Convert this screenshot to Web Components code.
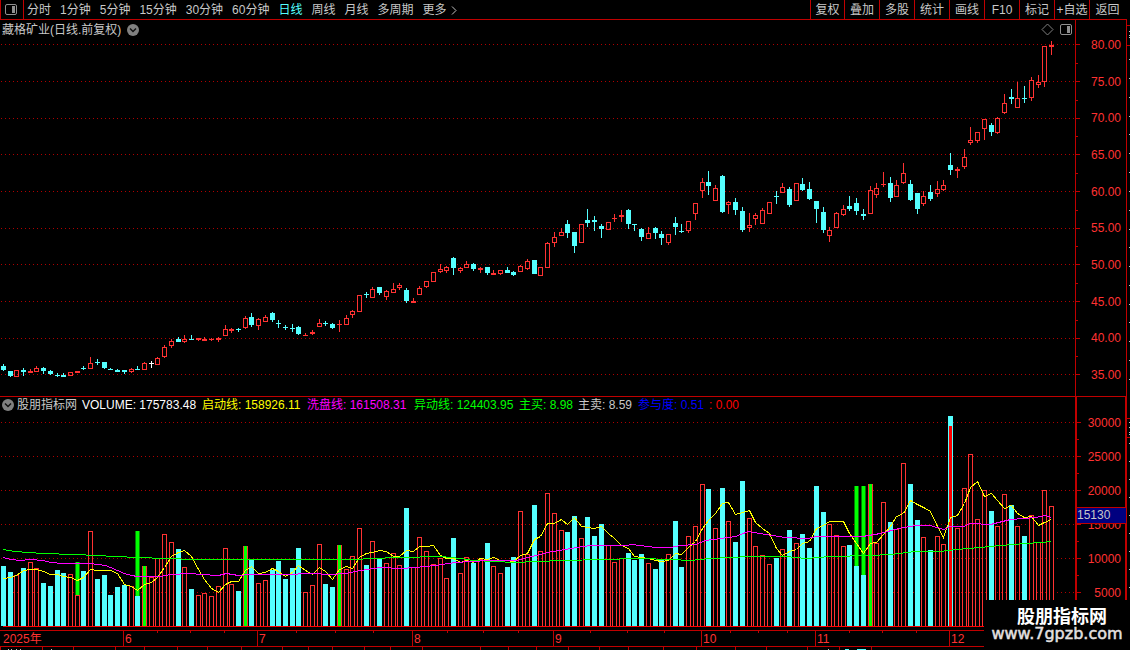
<!DOCTYPE html>
<html lang="zh-CN">
<head>
<meta charset="utf-8">
<title>藏格矿业 日线</title>
<style>
  html, body { margin: 0; background: #000; }
  body { font: 12px/16px "Liberation Sans", "Noto Sans CJK SC", sans-serif; color: #c8c8c8; }
</style>
</head>
<body>
<stock-app></stock-app>
<script>
const LINE = '#c00000', DOT = '#b00000', RED = '#ff3232', CYAN = '#54ffff';
const STEP = 6.7188, ORIGIN = 3.35;

// One day per entry: kind, high, body top, body bottom, low, volume top (chart units).
const DAYS = `C364,366,370,371,566 C371,371,376,377,572 R370,370,377,377,575 C368,370,372,376,568 R369,371,373,373,562
R366,368,372,372,568 C367,368,371,374,583 C370,371,374,375,586 C373,375,376,377,570 C373,375,377,377,573
R372,372,376,376,574 R371,371,373,373,595 C366,368,369,370,571 R357,363,369,369,531 C359,362,363,365,579
C362,362,368,369,575 C368,369,370,370,595 C369,370,372,372,587 C370,370,372,374,585 R368,369,372,373,586
C366,369,370,370,596 R362,363,370,370,566 W361,363,364,368,577 R357,358,365,365,558 R345,347,357,358,534
R339,341,346,348,542 C337,339,342,342,549 R335,339,342,343,567 C335,339,340,340,589 R338,338,340,341,595
R337,339,341,341,593 R338,339,340,341,596 R337,338,340,342,586 R325,329,336,336,548 R328,329,331,333,584
C328,329,330,332,591 R316,318,328,329,546 C313,317,325,327,560 R318,319,326,330,583 R315,317,322,322,580
C312,313,320,322,570 C320,323,324,328,561 C325,327,328,330,579 C324,328,329,332,568 C326,327,334,335,548
R333,335,336,336,592 R330,332,334,335,585 R319,323,327,327,544 C321,323,324,326,584 C323,324,328,329,587
R320,324,325,332,545 R315,318,325,325,569 R310,311,315,318,556 R295,295,312,312,528 C292,294,295,298,565
R287,289,298,298,541 C287,287,293,295,559 R290,291,297,300,563 R283,289,293,293,553 R283,285,288,290,565
C288,290,301,303,508 R298,301,303,303,567 R286,288,295,295,537 R281,281,287,288,551 R272,272,282,282,564
R264,269,272,273,558 R266,267,271,273,578 C257,258,268,275,538 R267,268,271,273,573 R261,264,268,268,557
C263,264,269,271,563 R267,268,270,273,559 C267,267,273,275,543 R270,273,275,275,566 R270,270,274,275,573
C267,270,273,273,567 C271,272,275,276,557 R265,266,272,272,511 R259,261,269,270,554 C260,260,274,274,505
R267,267,276,276,551 R242,243,268,268,493 R232,237,243,247,513 R228,232,236,236,530 C220,224,233,238,532
C232,232,246,253,516 R224,224,243,243,538 C209,220,223,227,517 C216,220,222,231,536 C224,226,229,238,524
R222,222,230,230,545 R214,218,219,222,562 R210,215,217,222,558 C209,210,224,229,553 C224,224,225,231,560
C228,229,237,241,554 R227,233,239,239,563 C227,228,233,239,569 C231,234,238,245,559 R234,234,243,245,554
C217,223,227,235,521 C224,231,232,233,567 R221,221,231,233,536 R203,203,214,220,526 R178,182,191,198,484
C171,182,186,195,489 R185,188,201,201,528 C175,176,212,213,488 R201,202,205,214,521 C198,202,210,215,542
C207,211,230,232,481 R213,225,228,232,518 R213,215,219,225,546 R208,210,224,224,555 R202,202,214,214,564
C191,196,197,204,558 R183,187,193,193,549 C187,189,205,207,530 R183,183,201,201,543 C178,184,190,191,534
C182,189,199,200,548 C201,201,209,223,486 C207,212,230,233,512 R227,230,236,242,524 R212,213,228,228,535
R205,209,215,216,546 C196,206,209,211,545 C198,203,211,215,566 C209,214,216,220,575 R186,190,214,214,484
R183,188,195,198,543 R172,184,185,187,502 C177,183,198,202,522 R180,185,197,197,529 R163,173,183,184,463
C180,184,200,201,484 C193,193,209,214,520 R191,196,204,206,537 C185,192,199,201,550 R181,189,194,197,536
R180,185,190,191,544 C153,165,170,175,416 R167,169,171,178,528 R149,157,167,169,488 R127,140,143,145,454
R132,132,141,143,519 R119,119,129,140,490 C123,125,132,136,511 R117,118,133,134,526 R94,103,113,114,494
C89,97,99,104,505 R82,98,108,108,526 C86,98,99,103,536 R77,80,98,101,515 R75,82,85,88,542
R46,46,82,87,490 R41,45,47,55,506`.split(/\s+/).map((s, i) => {
  const [high, top, bottom, low, vol] = s.slice(1).split(',').map(Number);
  return { x: Math.floor(ORIGIN + STEP * i), kind: s[0], high, top, bottom, low, vol };
});

// Fast volume average, one value per day.
const FAST = [578,577,575,570,569,569,571,574,574,576,577,580,577,569,570,570,570,573,584,586,590,584,582,577,567,
556,552,550,556,569,579,588,592,584,581,581,570,566,573,572,568,571,576,572,565,570,574,567,571,579,
569,566,568,557,553,552,550,551,556,556,550,551,546,546,545,555,558,558,562,560,562,558,559,557,560,
560,561,555,553,539,536,523,523,519,524,517,526,527,528,526,533,538,545,548,556,557,558,560,561,560,
553,554,547,541,528,520,513,503,502,514,512,510,522,528,533,548,555,551,549,543,541,528,525,521,521,
521,533,543,553,543,542,534,526,516,513,500,504,507,511,526,537,517,515,503,487,481,496,493,500,508,
505,513,517,516,525,522,519];
const MIDDLE = '3,557 10,559 20,560 30,559 43,560 50,562 62,563 90,563 105,565 110,567 124,573 131,575 137,576 160,576 170,574 190,573 200,574 218,575 226,573 238,575 250,574 286,574 310,573 330,574 345,573 360,570 380,567 400,568 415,567 435,565 455,562 470,561 490,560 515,560 532,556 547,552 570,548 590,545 625,545 632,544 655,547 670,547 680,545 695,544 705,540 735,536 748,531 765,534 785,537 808,538 815,536 862,536 880,533 898,528 915,525 930,525 943,529 950,526 963,526 970,523 990,524 1010,519 1035,517 1045,515 1051,517';
const SLOW = '3,549 14,551 28,552 42,553 75,554 95,555 115,556 137,557 165,558 195,559 355,559 370,558 400,557 440,556 460,558 472,560 515,562 535,561 565,560 600,559 640,558 670,559 690,560 710,558 750,556 785,556 805,558 830,556 870,555 890,554 915,551 940,551 955,549 980,547 1000,545 1025,543 1040,542 1051,541';

// Bars that carry a green signal: day index -> upper and lower end of the signal.
const SIGNALS = { 11: [562, 595], 20: [531, 596], 21: [566, 626], 36: [546, 626], 50: [545, 626], 127: [486, 566], 128: [486, 575], 129: [484, 626] };

const rect = (x, y, w, h, fill) => `<rect x="${x}" y="${y}" width="${w}" height="${h}" fill="${fill}"/>`;
const box = (x, y, w, h) => `<rect x="${x + .5}" y="${y + .5}" width="${w - 1}" height="${h - 1}" fill="none" stroke="${RED}"/>`;
const dots = y => `<line x1="1" x2="1074" y1="${y + .5}" y2="${y + .5}" stroke="${DOT}" stroke-dasharray="1 3"/>`;
const curve = (pts, color) => `<polyline points="${pts}" transform="translate(.5 .5)" fill="none" stroke="${color}"/>`;
const chevronDisc = '<svg width="12" height="12" viewBox="0 0 12 12" aria-hidden="true"><circle cx="6" cy="6" r="6" fill="#808080"/><path d="M3 4.5 6 7.5 9 4.5" fill="none" stroke="#101010" stroke-width="1.5"/></svg>';
const panelIcon = '<svg width="12" height="12" viewBox="0 0 12 12" aria-hidden="true"><rect x=".5" y=".5" width="11" height="10" rx="1.5" fill="none" stroke="#909090"/><rect x="7" y="2" width="3" height="7" fill="#909090"/></svg>';

function define(name, html, extra) {
  const template = document.createElement('template');
  customElements.define(name, class extends HTMLElement {
    constructor() {
      super();
      this.attachShadow({ mode: 'open' });
      template.innerHTML = typeof html === 'function' ? html(this) : html;
      this.shadowRoot.append(template.content.cloneNode(true));
      if (extra) extra(this);
    }
  });
}

define('stock-toolbar', `
<style>
  :host { display: flex; justify-content: space-between; box-sizing: border-box; height: 20px; border-bottom: 1px solid ${LINE}; overflow: hidden; }
  nav { display: flex; }
  button { all: unset; box-sizing: border-box; cursor: pointer; line-height: 18px; padding-top: 1px; white-space: nowrap; }
  .panel { width: 24px; border: solid ${LINE}; border-width: 0 1px; padding: 3px 4px; line-height: 0; }
  .periods { gap: 9px; }
  .periods button.panel { margin-right: -6px; }
  .on { color: ${CYAN}; }
  .more { display: flex; align-items: center; gap: 4px; }
  .tools { display: grid; grid-template-columns: 34px repeat(7, 35px) 38px; }
  .tools button { border-left: 1px solid ${LINE}; text-align: center; }
  .tools button:last-child { padding-right: 2px; }
</style>
<nav class="periods" aria-label="周期">
  <button class="panel" aria-label="侧栏">${panelIcon}</button>
  <button>分时</button><button>1分钟</button><button>5分钟</button><button>15分钟</button><button>30分钟</button><button>60分钟</button>
  <button class="on">日线</button><button>周线</button><button>月线</button><button>多周期</button>
  <button class="more">更多<svg width="6" height="9" viewBox="0 0 6 9" aria-hidden="true"><path d="M1 .5 5 4.5 1 8.5" fill="none" stroke="#c0c0c0"/></svg></button>
</nav>
<nav class="tools" aria-label="工具">
  <button>复权</button><button>叠加</button><button>多股</button><button>统计</button><button>画线</button><button>F10</button><button>标记</button><button>+自选</button><button>返回</button>
</nav>`);

define('price-pane', () => {
  const candles = DAYS.map(d => {
    const color = d.kind === 'C' ? CYAN : d.kind === 'W' ? '#fff' : RED;
    const h = d.bottom - d.top;
    if (d.kind === 'R' && h > 2)
      return rect(d.x, d.high, 1, d.top - d.high, color) + box(d.x - 2, d.top, 5, h) + rect(d.x, d.bottom, 1, d.low - d.bottom, color);
    return rect(d.x, d.high, 1, d.low - d.high, color) + rect(d.x - 2, d.top, 5, h, color);
  }).join('');
  return `
<style>
  :host { display: grid; min-height: 0; border-bottom: 1px solid ${LINE}; box-sizing: border-box; }
  :host > * { grid-area: 1 / 1; }
  .plot { display: block; width: 100%; height: 100%; min-height: 0; }
  header { display: flex; justify-content: space-between; align-items: center; height: 19px; padding: 0 3px 0 2px; z-index: 1; }
  header div { display: flex; align-items: center; gap: 6px; }
  button { all: unset; display: block; line-height: 0; cursor: pointer; }
</style>
<header>
  <div><span>藏格矿业(日线.前复权)</span><button aria-label="展开">${chevronDisc}</button></div>
  <div><button aria-label="标注"><svg width="13" height="13" viewBox="0 0 13 13" aria-hidden="true"><path d="M6.500 1 12 6.500 6.500 12 1 6.500Z" fill="none" stroke="#808080"/></svg></button><button aria-label="面板">${panelIcon}</button></div>
</header>
<svg class="plot" viewBox="0 20 1075 376" preserveAspectRatio="none" shape-rendering="crispEdges" role="img" aria-label="日K线">
${[44, 81, 118, 154, 191, 228, 264, 301, 338, 374].map(dots).join('')}${candles}
</svg>`;
});

define('volume-pane', () => {
  const bars = DAYS.map((d, i) => {
    let s = d.kind === 'C' ? rect(d.x - 2, d.vol, 5, 626 - d.vol, CYAN) : box(d.x - 2, d.vol, 5, 627 - d.vol);
    const g = SIGNALS[i];
    if (g) {
      if (d.kind === 'C' || i === 11) s += rect(d.x - 2, g[0], 5, g[1] - g[0], '#008000');
      s += rect(d.x - 1, g[0], 3, g[1] - g[0], '#00ff00');
    }
    if (i === 141) s += rect(d.x - 1, 426, 3, 200, '#ff0000');
    return s;
  }).join('');
  return `
<style>
  :host { display: grid; min-height: 0; }
  :host > * { grid-area: 1 / 1; }
  .plot { display: block; width: 100%; height: 100%; min-height: 0; }
  .legend { display: grid; grid-template-columns: 15px 65px 120px 105px 107px 105px 59px 60px 71px auto; align-content: start; align-items: center; padding-left: 2px; z-index: 1; white-space: nowrap; }
  button { all: unset; line-height: 0; cursor: pointer; }
  .w { color: #fff; } .y { color: #ff0; } .m { color: #f0f; } .g { color: #0f0; } .b { color: #00f; } .r { color: #f00; }
</style>
<div class="legend">
  <button aria-label="指标菜单">${chevronDisc}</button><span>股朋指标网</span><span class="w">VOLUME: 175783.48</span><span class="y">启动线: 158926.11</span><span class="m">洗盘线: 161508.31</span><span class="g">异动线: 124403.95</span><span class="g">主买: 8.98</span><span>主卖: 8.59</span><span class="b">参与度: 0.51</span><span class="r">: 0.00</span>
</div>
<svg class="plot" viewBox="0 397 1075 233" preserveAspectRatio="none" shape-rendering="crispEdges" role="img" aria-label="成交量">
${[422, 456, 490, 524, 558, 592].map(dots).join('')}${bars}
${curve(DAYS.map((d, i) => d.x + ',' + FAST[i]).join(' '), '#ffff00')}${curve(SLOW, '#00ff00')}${curve(MIDDLE, '#ff00ff')}
${rect(3, 626, 1050, 1, '#ff0000')}
</svg>`;
});

// Vertical scale; its kind attribute picks the labels and ticks from SCALES.
define('value-scale', `
<style>
  :host { display: grid; min-height: 0; box-sizing: border-box; position: relative; color: ${RED}; }
  :host > * { grid-area: 1 / 1; }
  :host([kind=price]) { border-bottom: 1px solid ${LINE}; }
  svg { display: block; width: 100%; height: 100%; min-height: 0; }
  ol { list-style: none; margin: 0; display: flex; flex-direction: column; justify-content: space-between; text-align: right; line-height: 12px; padding: 19px 6px 15px 0; }
  :host([kind=volume]) ol { padding: 20px 6px 31px 0; }
  ::slotted(output) { position: absolute; left: 2px; top: 47%; right: 1px; height: 15px; line-height: 15px; background: #000080; border: solid ${LINE}; border-width: 1px 0; color: #c8c8c8; }
</style>
<svg preserveAspectRatio="none" shape-rendering="crispEdges" aria-hidden="true"></svg><ol></ol><slot></slot>`);
const SCALES = {
  price: { labels: ['80.00', '75.00', '70.00', '65.00', '60.00', '55.00', '50.00', '45.00', '40.00', '35.00'],
    ticks: [44, 81, 118, 154, 191, 228, 264, 301, 338, 374], minor: [63, 100, 136, 173, 210, 246, 283, 320, 356], view: '0 20 52 376', w: 1, right: 51 },
  volume: { labels: ['30000', '25000', '20000', '15000', '10000', '5000'],
    ticks: [422, 456, 490, 524, 558, 592], minor: [439, 473, 507, 541, 575, 609], view: '0 397 52 233', w: 2, right: 50 }
};

define('date-axis', () => {
  const ticks = [157, 190, 224, 296, 335, 373, 447, 483, 518, 590, 627, 664, 730, 758, 787, 849, 882, 916];
  return `
<style>
  :host { display: grid; box-sizing: border-box; height: 17px; border: solid ${LINE}; border-width: 1px 0; color: ${RED}; }
  :host > * { grid-area: 1 / 1; }
  svg { display: block; width: 100%; height: 2px; }
  ol { list-style: none; margin: 0; padding: 0; display: grid; grid-template-columns: 123fr 134fr 155fr 141fr 148fr 114fr 134fr 178fr; line-height: 16px; height: 15px; }
  li { border-left: 1px solid ${LINE}; padding-left: 1px; height: 15px; }
  li:first-child { border-color: transparent; padding-left: 2px; }
</style>
<svg viewBox="0 631 1127 2" preserveAspectRatio="none" shape-rendering="crispEdges" aria-hidden="true">${ticks.map(x => rect(x, 631, 1, 2, LINE)).join('')}</svg>
<ol><li>2025年</li><li>6</li><li>7</li><li>8</li><li>9</li><li>10</li><li>11</li><li>12</li></ol>`;
});

define('edge-strip', () => `
<style>:host { display: block; height: 3px; } svg { display: block; width: 100%; height: 3px; }</style>
<svg viewBox="0 647 1127 3" preserveAspectRatio="none" shape-rendering="crispEdges" aria-hidden="true">
${[0, 42, 73, 115, 144, 177, 207, 241, 282, 308, 332, 364, 390, 422, 480, 508, 536, 568, 599, 628, 663, 696, 735, 766, 807, 839, 871].map(x => rect(x, 647, 1, 3, LINE)).join('')}
${[8, 11, 16, 20, 51, 828].map(x => rect(x, 649, 1, 1, '#c0c0c0')).join('')}${rect(845, 649, 4, 1, CYAN)}${rect(857, 649, 9, 1, CYAN)}
</svg>`);

define('side-strip', () => `
<style>:host { display: block; min-height: 0; } svg { display: block; width: 100%; height: 100%; }</style>
<svg viewBox="0 0 3 650" preserveAspectRatio="none" shape-rendering="crispEdges" aria-hidden="true">
${[25, 45, 418, 437].map(y => rect(0, y, 3, 1, LINE)).join('')}
${[31, 35, 37, 59, 78, 97, 116, 134, 153, 172, 191, 210, 229, 247, 266, 285, 304, 322, 341, 360, 379, 422, 427, 432, 434, 443, 461, 479, 497, 515, 533, 551, 569, 587].map(y => rect(2, y, 1, 1, '#c0c0c0')).join('')}
</svg>`);

define('water-mark', `
<style>
  :host { display: block; box-sizing: border-box; width: 146px; height: 50px; padding-top: 4px; background: #000; color: #fff; text-align: center; }
  strong { display: block; font: bold 18px/22px "Noto Sans CJK SC", sans-serif; padding-left: 10px; }
  a { display: block; color: #e4e0e0; text-decoration: none; font: 16px/16px "DejaVu Sans", sans-serif; -webkit-text-stroke: 0.5px currentColor; }
</style>
<strong><slot></slot></strong><a href="#"><slot name="site"></slot></a>`);

define('stock-app', `
<style>
  :host { display: grid; position: relative; height: 100vh; min-height: 400px; overflow: hidden;
    grid-template-columns: minmax(0, 1fr) 52px 3px; grid-template-rows: 20px minmax(0, 377fr) minmax(0, 233fr) 17px 3px; }
  stock-toolbar, date-axis, edge-strip { grid-column: 1 / 3; }
  side-strip { grid-column: 3; grid-row: 1 / -1; }
  water-mark { position: absolute; right: 0; bottom: 0; z-index: 2; }
</style>
<stock-toolbar></stock-toolbar>
<price-pane></price-pane><value-scale kind="price"></value-scale>
<volume-pane></volume-pane><value-scale kind="volume"><output>15130</output></value-scale>
<date-axis></date-axis>
<edge-strip></edge-strip>
<side-strip></side-strip>
<water-mark>股朋指标网<span slot="site">www.7gpzb.com</span></water-mark>`, app => {
  for (const el of app.shadowRoot.querySelectorAll('value-scale')) {
    const s = SCALES[el.getAttribute('kind')], [, top, , height] = s.view.split(' ').map(Number);
    customElements.upgrade(el);
    const svg = el.shadowRoot.querySelector('svg');
    svg.setAttribute('viewBox', s.view);
    svg.innerHTML = rect(0, top, s.w, height, LINE) + rect(s.right, top, 52 - s.right, height, LINE)
      + s.ticks.map(y => rect(s.w, y, 4, 1, LINE)).join('') + s.minor.map(y => rect(s.w, y, 2, 1, LINE)).join('');
    el.shadowRoot.querySelector('ol').innerHTML = s.labels.map(t => `<li>${t}</li>`).join('');
  }
});
</script>
</body>
</html>
